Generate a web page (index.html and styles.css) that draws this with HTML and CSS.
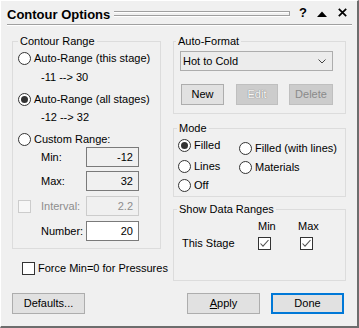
FILE: index.html
```html
<!DOCTYPE html>
<html>
<head>
<meta charset="utf-8">
<link rel="stylesheet" href="styles.css">
</head>
<body>
<div class="window">
  <div class="titlebar">
    <span class="title">Contour Options</span>
    <span class="grip"></span>
    <span class="tb-help">?</span>
    <svg class="tb-up" width="10" height="6" viewBox="0 0 10 6"><polygon points="0,6 5,0.6 10,6" fill="#000"/></svg>
    <svg class="tb-close" width="9" height="9" viewBox="0 0 9 9"><path d="M0.8 0.8 L8.2 8.2 M8.2 0.8 L0.8 8.2" stroke="#000" stroke-width="1.7" fill="none"/></svg>
  </div>
  <div class="sep"></div>

  <div class="columns">
    <div class="col-left">
      <fieldset class="group g-range">
        <legend>Contour Range</legend>
        <div class="gbody range-body">
          <div class="row h21"><span class="radio"></span><span class="rl">Auto-Range (this stage)</span></div>
          <div class="row h16 indent">-11 --&gt; 30</div>
          <div class="row h20 mt4"><span class="radio on"></span><span class="rl">Auto-Range (all stages)</span></div>
          <div class="row h17 indent">-12 --&gt; 32</div>
          <div class="row h16 mt5"><span class="radio"></span><span class="rl">Custom Range:</span></div>
          <div class="row h20 indent"><span class="flabel">Min:</span><span class="field ro">-12</span></div>
          <div class="row h20 mt4 indent"><span class="flabel">Max:</span><span class="field ro">32</span></div>
          <div class="row h20 mt5"><span class="check disabled"></span><span class="flabel dim int">Interval:</span><span class="field dis">2.2</span></div>
          <div class="row h20 mt5 indent"><span class="flabel">Number:</span><span class="field edit">20</span></div>
        </div>
      </fieldset>
      <div class="force"><span class="check"></span><span class="rl">Force Min=0 for Pressures</span></div>
    </div>

    <div class="col-right">
      <fieldset class="group g-auto">
        <legend>Auto-Format</legend>
        <div class="gbody auto-body">
          <div class="combo"><span>Hot to Cold</span><svg width="8" height="5" viewBox="0 0 8 5"><polyline points="0.5,0.5 4,4 7.5,0.5" fill="none" stroke="#444" stroke-width="1"/></svg></div>
          <div class="btnrow">
            <span class="btn b-new">New</span>
            <span class="btn b-edit disabled emb">Edit</span>
            <span class="btn b-del disabled">Delete</span>
          </div>
        </div>
      </fieldset>

      <fieldset class="group g-mode">
        <legend>Mode</legend>
        <div class="gbody mode-body">
          <div class="mcol mcol1">
            <div class="row h21"><span class="radio on"></span><span class="rl">Filled</span></div>
            <div class="row h20"><span class="radio"></span><span class="rl">Lines</span></div>
            <div class="row h19"><span class="radio"></span><span class="rl">Off</span></div>
          </div>
          <div class="mcol mcol2">
            <div class="row h20"><span class="radio"></span><span class="rl">Filled (with lines)</span></div>
            <div class="row h18"><span class="radio"></span><span class="rl">Materials</span></div>
          </div>
        </div>
      </fieldset>

      <fieldset class="group g-show">
        <legend>Show Data Ranges</legend>
        <div class="gbody show-body">
          <span></span><span class="hdr">Min</span><span class="hdr hmax">Max</span>
          <span class="stage">This Stage</span>
          <span class="cell"><span class="check"><svg width="11" height="11" viewBox="0 0 11 11"><polyline points="1.5,5.5 4,8.2 9.5,2" fill="none" stroke="#555" stroke-width="1.1"/></svg></span></span>
          <span class="cell cmax"><span class="check"><svg width="11" height="11" viewBox="0 0 11 11"><polyline points="1.5,5.5 4,8.2 9.5,2" fill="none" stroke="#555" stroke-width="1.1"/></svg></span></span>
        </div>
      </fieldset>
    </div>
  </div>

  <div class="footer">
    <span class="btn fbtn">Defaults...</span>
    <span class="btn fbtn apply"><u>A</u>pply</span>
    <span class="btn fbtn done">Done</span>
  </div>
</div>
</body>
</html>
```

FILE: styles.css
```css
body {
  margin: 0;
  background: #f0f0f0;
  font-family: "Liberation Sans", Arial, sans-serif;
  font-size: 11px;
  color: #000;
}

.window {
  width: 359px;
  height: 328px;
  box-sizing: border-box;
  border-top: 1px solid #ffffff;
  border-left: 1px solid #ffffff;
  border-right: 2px solid #6d6d6d;
  border-bottom: 2px solid #6d6d6d;
  background: #f0f0f0;
  display: flex;
  flex-direction: column;
}

/* title */
.titlebar {
  display: flex;
  align-items: flex-start;
  height: 15px;
  margin: 6px 0 0 6px;
  padding-right: 10px;
}
.title {
  font-weight: bold;
  font-size: 13px;
  line-height: 15px;
  white-space: nowrap;
}
.grip {
  flex: 1;
  margin: 4px 0 0 4px;
  height: 3px;
  border-top: 1px solid #a0a0a0;
  border-bottom: 1px solid #a0a0a0;
  border-right: 1px solid #a0a0a0;
  background: linear-gradient(#ffffff 0 1px, transparent 1px);
  box-shadow: 0 1px 0 #ffffff;
}
.tb-help {
  width: 8px;
  margin: -1px 0 0 9px;
  font-weight: bold;
  font-size: 13px;
  line-height: 13px;
}
.tb-up {
  margin: 4px 0 0 10px;
}
.tb-close {
  margin: 1px 0 0 11px;
}
.sep {
  margin: 2px 5px 0 6px;
  height: 0;
  border-top: 1px solid #a0a0a0;
  border-bottom: 1px solid #ffffff;
}

/* columns */
.columns {
  display: flex;
  align-items: flex-start;
  gap: 12px;
  margin: 9px 0 0 11px;
}
.col-left { width: 149px; }
.col-right { width: 173px; }

.group {
  margin: 0;
  padding: 0;
  border: 1px solid #dcdcdc;
  min-width: 0;
}
.group legend {
  padding: 0 2px;
  line-height: 12px;
  font-size: 11px;
}
.g-range legend { margin-left: 5px; }
.g-auto legend { margin-left: 2px; }
.g-mode legend, .g-show legend { margin-left: 3px; }
.g-mode { margin-top: 8px; }
.g-show { margin-top: 6px; }

.row {
  display: flex;
  align-items: center;
  line-height: 13px;
  white-space: nowrap;
}
.h16 { height: 16px; }
.h17 { height: 17px; }
.h18 { height: 18px; }
.h19 { height: 19px; }
.h20 { height: 20px; }
.h21 { height: 21px; }
.mt4 { margin-top: 4px; }
.mt5 { margin-top: 5px; }
.indent { padding-left: 23px; }

.radio {
  width: 13px;
  height: 13px;
  box-sizing: border-box;
  border: 1px solid #333333;
  border-radius: 50%;
  background: #ffffff;
  display: flex;
  align-items: center;
  justify-content: center;
  flex: none;
}
.radio.on::after {
  content: "";
  width: 7px;
  height: 7px;
  border-radius: 50%;
  background: #333333;
}
.rl { margin-left: 3px; }

.check {
  width: 13px;
  height: 13px;
  box-sizing: border-box;
  border: 1px solid #333333;
  background: #ffffff;
  display: flex;
  align-items: center;
  justify-content: center;
  flex: none;
}
.check.disabled {
  border-color: #cccccc;
  background: #f7f7f7;
}

/* contour range */
.range-body { padding: 1px 0 7px 5px; }
.flabel { width: 45px; }
.flabel.int { width: 45px; margin-left: 10px; }
.dim { color: #8d8d8d; }
.field {
  width: 53px;
  height: 20px;
  box-sizing: border-box;
  border: 1px solid #7a7a7a;
  background: #f0f0f0;
  text-align: right;
  padding-right: 5px;
  line-height: 18px;
}
.field.edit { background: #ffffff; }
.field.dis {
  border-color: #cccccc;
  color: #8d8d8d;
}

.force {
  display: flex;
  align-items: center;
  height: 18px;
  margin: 10px 0 0 10px;
  white-space: nowrap;
  line-height: 13px;
}

/* auto format */
.auto-body { padding: 4px 0 8px 6px; }
.combo {
  width: 153px;
  height: 20px;
  box-sizing: border-box;
  border: 1px solid #adadad;
  background: #ececec;
  display: flex;
  align-items: center;
  justify-content: space-between;
  padding: 0 6px 0 2px;
  line-height: 13px;
}
.btnrow {
  display: flex;
  margin-top: 13px;
  padding-left: 1px;
}
.btn {
  height: 21px;
  box-sizing: border-box;
  border: 1px solid #adadad;
  background: #e1e1e1;
  display: flex;
  align-items: center;
  justify-content: center;
  line-height: 13px;
  white-space: nowrap;
}
.b-new { width: 43px; }
.b-edit { width: 42px; margin-left: 12px; }
.b-del { width: 44px; margin-left: 11px; }
.btn.disabled {
  background: #cccccc;
  border-color: #bfbfbf;
  color: #8a8a8a;
}
.btn.emb {
  color: #f6f6f6;
  text-shadow: 0 0 1px #8a8a8a, 0 0 1px #8a8a8a;
}

/* mode */
.mode-body {
  display: flex;
  padding: 1px 0 1px 4px;
}
.mcol1 { width: 61px; }
.mcol2 { margin-top: 3px; }

/* show data ranges */
.show-body {
  display: grid;
  grid-template-columns: 76px 41px 40px;
  grid-template-rows: 16px 17px;
  row-gap: 1px;
  align-items: center;
  padding: 3px 0 28px 8px;
  line-height: 13px;
}
.hmax { margin-left: -1px; }
.cell { display: flex; }
.cmax { margin-left: 1px; }

/* footer */
.footer {
  display: flex;
  margin: 12px 13px 0 11px;
}
.fbtn { width: 73px; }
.apply { margin-left: auto; }
.done {
  margin-left: 11px;
  border: 2px solid #0078d7;
}
```
